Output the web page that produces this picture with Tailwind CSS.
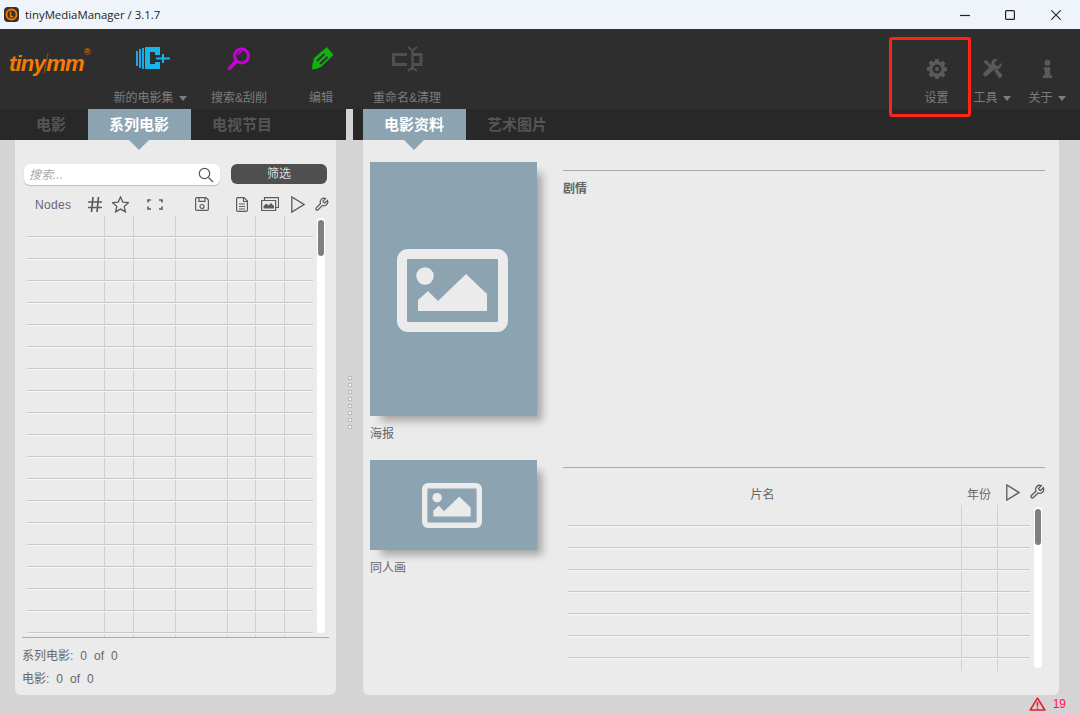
<!DOCTYPE html>
<html lang="zh">
<head>
    <meta charset="UTF-8">
    <title>tinyMediaManager</title>
    <script src="https://cdn.jsdelivr.net/npm/@tailwindcss/browser@4"></script>
</head>
<body class="relative w-[1080px] h-[713px] overflow-hidden bg-[#d4d4d4] font-['Liberation_Sans','Noto_Sans_CJK_SC',sans-serif] text-xs text-[#666]">

    <!-- title bar -->
    <div class="flex items-center h-[29px] bg-[#eff4fb] text-[#222]">
        <div class="flex items-center justify-center w-[15px] h-[15px] ml-1 bg-[#333] rounded-sm">
            <svg width="13" height="13" viewBox="0 0 13 13"><circle cx="6.5" cy="6.5" r="5" fill="none" stroke="#f57c00" stroke-width="1.8"/><path d="M5.5 3.5v5h3" fill="none" stroke="#f57c00" stroke-width="1.5"/></svg>
        </div>
        <span class="ml-[6px] font-['Open_Sans',sans-serif] text-[11.4px]">tinyMediaManager / 3.1.7</span>
        <div class="flex items-center ml-auto">
            <svg class="mr-[35px]" width="10" height="10" viewBox="0 0 10 10"><path d="M0 5.5h10" stroke="#222" stroke-width="1.2"/></svg>
            <svg class="mr-[36px]" width="10" height="10" viewBox="0 0 10 10"><rect x=".6" y=".6" width="8.8" height="8.8" rx="1" fill="none" stroke="#222" stroke-width="1.2"/></svg>
            <svg class="mr-[19px]" width="10" height="10" viewBox="0 0 10 10"><path d="M.3.3l9.4 9.4M9.7.3L.3 9.7" stroke="#222" stroke-width="1.1"/></svg>
        </div>
    </div>

    <!-- toolbar -->
    <div class="flex h-[80px] bg-[#2e2e2e] text-[#7d7d7d]">
        <div class="w-[100px] pt-[21px] pl-[9px]">
            <div class="relative flex w-fit font-['Liberation_Sans',sans-serif] text-[22px] leading-[28px] font-bold italic tracking-[-0.8px] text-[#f57c00]">tiny<span class="-mx-[2px] font-normal text-[#a85500] scale-x-50 scale-y-125">/</span>mm<span class="absolute -right-[6px] -top-[3px] text-[9px] leading-[10px] not-italic font-normal">®</span></div>
        </div>
        <div class="flex flex-col items-center w-[100px]">
            <svg class="mt-[17px] ml-[6px] h-[26px]" width="36" height="26" viewBox="0 0 36 26">
                <path d="M1 5h2v15H1zM4 3h2v19H4zM7 2h2v21H7z" fill="#1aa8e0"/>
                <path d="M10 1h15v8h-5V6h-5v12h5v-2h5v7H10z" fill="#18b4ec"/>
                <path d="M21 12.500h14M28 8v9" stroke="#18b4ec" stroke-width="2"/>
            </svg>
            <div class="flex items-center gap-[5px] mt-[18px] leading-[16px]"><span>新的电影集</span><span class="w-0 h-0 border-x-[4.500px] border-x-transparent border-t-[5px] border-t-[#7d7d7d]"></span></div>
        </div>
        <div class="flex flex-col items-center w-[78px]">
            <svg class="mt-[17px] h-[26px]" width="26" height="26" viewBox="0 0 26 26"><circle cx="15.500" cy="10" r="7" fill="none" stroke="#c800dc" stroke-width="3"/><path d="M10 15.500L3.500 22.500" stroke="#c800dc" stroke-width="3.600" stroke-linecap="round"/><path d="M12 9a4 4 0 0 1 4-3" fill="none" stroke="#c800dc" stroke-width="1.500"/></svg>
            <div class="mt-[18px] leading-[16px]">搜索&amp;刮削</div>
        </div>
        <div class="flex flex-col items-center w-[86px]">
            <svg class="mt-[17px] h-[26px]" width="26" height="26" viewBox="0 0 26 26"><path d="M19 1l6.500 8L13 21q-4 2-9 2.500Q4 18 6 12z" fill="#0cb40c"/><path d="M9 15l7.500-7M12 18l7.500-7" stroke="#2e2e2e" stroke-width="1.800"/></svg>
            <div class="mt-[18px] leading-[16px]">编辑</div>
        </div>
        <div class="flex flex-col items-center w-[86px]">
            <svg class="mt-[17px] h-[26px]" width="32" height="26" viewBox="0 0 32 26" fill="none" stroke="#505050" stroke-width="3"><path d="M16 8.500H2.500v10H16"/><path d="M21 8.500h9v10h-9"/><path d="M21.500 3v21" stroke-width="2.400"/><path d="M17 1l4.500 3.500L26 1M17 25l4.500-3.500L26 25" stroke-width="2"/></svg>
            <div class="mt-[18px] leading-[16px]">重命名&amp;清理</div>
        </div>
        <div class="flex-1"></div>
        <div class="flex flex-col items-center w-[53px]">
            <svg class="mt-[30px] h-[20px]" width="20" height="20" viewBox="0 0 20 20"><path fill="#5a5a5a" fill-rule="evenodd" d="M8.300 0h3.400l.5 2.500 1.600.7 2.200-1.400 2.400 2.400-1.400 2.200.7 1.600 2.500.5v3.400l-2.500.5-.7 1.600 1.400 2.200-2.400 2.400-2.200-1.400-1.600.7-.5 2.500H8.300l-.5-2.500-1.600-.7L4 18.200l-2.400-2.400L3 13.600l-.7-1.600L0 11.700V8.300l2.300-.5.700-1.600L1.600 4 4 1.600l2.200 1.400 1.600-.7zM10 5.500a4.500 4.500 0 1 0 0 9 4.500 4.500 0 0 0 0-9zM10 8a2 2 0 1 1 0 4 2 2 0 0 1 0-4z"/></svg>
            <div class="mt-[11px] leading-[16px]">设置</div>
        </div>
        <div class="flex flex-col items-center w-[58px]">
            <svg class="mt-[30px] h-[20px]" width="21" height="20" viewBox="0 0 22 22" fill="#5a5a5a"><path d="M21 4l-4 4-3-1-1-3 4-4c-3-.8-6 .6-7 3-.5 1.300-.4 2.500 0 3.500L1.500 15c-1.500 1.500-.5 3 0 3.500s2 1.500 3.500 0L13.500 11c1 .4 2.200.5 3.500 0 2.600-1 4.800-3.600 4-7z"/><path d="M1 3l3-2 6 6-2 2.500zM13 13l2.500-2.500 5.500 6c1 1 .8 2.500 0 3.500s-2.500 1-3.500 0z"/></svg>
            <div class="flex items-center gap-[5px] mt-[11px] leading-[16px]"><span>工具</span><span class="w-0 h-0 border-x-[4.500px] border-x-transparent border-t-[5px] border-t-[#7d7d7d]"></span></div>
        </div>
        <div class="flex flex-col items-center w-[52px] mr-[7px]">
            <svg class="mt-[30px] h-[20px]" width="11" height="20" viewBox="0 0 12 22" fill="#5a5a5a"><circle cx="6" cy="4" r="3.200"/><path d="M2 9h7v9h2v3H1v-3h2v-6H2z"/></svg>
            <div class="flex items-center gap-[5px] mt-[11px] leading-[16px]"><span>关于</span><span class="w-0 h-0 border-x-[4.500px] border-x-transparent border-t-[5px] border-t-[#7d7d7d]"></span></div>
        </div>
    </div>

    <div class="flex h-[604px]">
        <!-- left column -->
        <div class="flex flex-col w-[346px]">
            <div class="flex h-[31px] bg-[#282828] pl-[15px] text-[15px] font-bold text-[#555]">
                <div class="flex items-center justify-center w-[73px] pr-[1px]">电影</div>
                <div class="relative flex items-center justify-center w-[103px] pr-[1px] bg-[#8ca3b2] text-white">系列电影
                    <svg class="absolute left-[41px] top-[31px] z-10" width="20" height="10" viewBox="0 0 20 10"><path d="M0 0h20L10 10z" fill="#8ca3b2"/></svg>
                </div>
                <div class="flex items-center pl-[21px]">电视节目</div>
            </div>
            <div class="relative w-[321px] h-[555px] ml-[15px] bg-[#ebebeb] rounded-b-md">
                <div class="flex pt-[24px] pl-[9px]">
                    <div class="flex items-center justify-between w-[196px] h-[21px] pl-[5px] pr-[6px] bg-white rounded-md shadow-[0_1px_1px_rgba(0,0,0,0.2)] text-[#aaa] italic">
                        <span>搜索...</span>
                        <svg width="16" height="16" viewBox="0 0 16 16" fill="none" stroke="#555" stroke-width="1.200"><circle cx="6.500" cy="6.500" r="5.200"/><path d="M10.500 10.500L15 15"/></svg>
                    </div>
                    <div class="flex items-center justify-center w-[96px] h-[20px] ml-[11px] bg-[#4f4f4f] rounded-md text-[#ddd]">筛选</div>
                </div>
                <div class="flex items-center h-[30px] pt-[8px] ml-[12px] w-[303px]">
                    <div class="w-[57px] mt-[1px] pl-[8px] tracking-[0.3px] text-[#667]">Nodes</div>
                    <div class="flex justify-center w-[22px]"><svg width="14" height="15" viewBox="0 0 14 15" stroke="#5c5c5c" stroke-width="1.700"><path d="M5 0L3.500 15M10.500 0L9 15M0 5h14M0 10.500h14"/></svg></div>
                    <div class="flex justify-center w-[28px]"><svg width="17" height="17" viewBox="0 0 17 17" fill="none" stroke="#5c5c5c" stroke-width="1.300"><path d="M8.500 1l2.300 5.100 5.500.6-4.100 3.700 1.200 5.500-4.900-2.800-4.900 2.800 1.200-5.500L.7 6.700l5.500-.6z"/></svg></div>
                    <div class="flex justify-center w-[42px]"><svg width="16" height="11" viewBox="0 0 16 11" fill="none" stroke="#5c5c5c" stroke-width="1.600"><path d="M4 1H1v2.500M12 1h3v2.500M4 10H1V7.500M12 10h3V7.500"/></svg></div>
                    <div class="flex justify-center w-[52px]"><svg width="14" height="14" viewBox="0 0 14 14" fill="none" stroke="#5c5c5c" stroke-width="1.200"><path d="M1.500.6h9.500l2.400 2.400v9.200a1.200 1.200 0 0 1-1.200 1.200H1.800a1.200 1.200 0 0 1-1.200-1.200V1.500z"/><path d="M4 .8v3.500h6V.8"/><circle cx="7" cy="9.500" r="2"/></svg></div>
                    <div class="flex justify-center w-[28px]"><svg width="12" height="15" viewBox="0 0 12 15" fill="none" stroke="#5c5c5c" stroke-width="1.200"><path d="M1.500.6H8l3.400 3.400v9a1.300 1.300 0 0 1-1.300 1.300H1.900A1.300 1.300 0 0 1 .6 13V1.500z"/><path d="M3 7h6M3 9.500h6M3 12h6M7.500.8v3.700h3.700"/></svg></div>
                    <div class="flex justify-center w-[28px]"><svg width="18" height="14" viewBox="0 0 18 14"><path d="M3.500 3V.6h14V10.500H15" fill="none" stroke="#5c5c5c" stroke-width="1.200"/><path d="M.6 3.500h14v10H.6z" fill="none" stroke="#5c5c5c" stroke-width="1.200"/><path d="M2.500 11.500V9l3-2.500 2 2L10 6l3 3v2.500z" fill="#5c5c5c"/></svg></div>
                    <div class="flex justify-center w-[28px]"><svg width="14" height="17" viewBox="0 0 14 17" fill="none" stroke="#5c5c5c" stroke-width="1.300"><path d="M.8.900v15.200L13 8.500z"/></svg></div>
                    <div class="flex justify-center w-[18px]"><svg width="15" height="15" viewBox="0 0 24 24" fill="none" stroke="#5c5c5c" stroke-width="2"><path d="M14.700 6.300a1 1 0 0 0 0 1.400l1.600 1.600a1 1 0 0 0 1.400 0l3.770-3.770a6 6 0 0 1-7.940 7.940l-6.910 6.910a2.120 2.120 0 0 1-3-3l6.910-6.910a6 6 0 0 1 7.940-7.940l-3.760 3.760z"/></svg></div>
                </div>
                <div class="flex ml-[12px]">
                    <div class="w-[286px] h-[422px] overflow-hidden" id="left-rows"></div>
                    <div class="w-[8px] h-[415px] ml-[4px] mt-[3px] p-[1px] pt-[2px] bg-white rounded-full">
                        <div class="h-[36px] bg-[#808080] rounded-full"></div>
                    </div>
                </div>
                <div class="mx-[7px] border-t border-[#aaa] pt-[10px]">
                    <div class="flex gap-[7px] h-[23px] leading-[17px]"><span>系列电影:</span><span>0</span><span>of</span><span>0</span></div>
                    <div class="flex gap-[7px] leading-[17px]"><span>电影:</span><span>0</span><span>of</span><span>0</span></div>
                </div>
            </div>
        </div>

        <!-- splitter -->
        <div class="flex flex-col w-[7px]">
            <div class="h-[31px]"></div>
            <div class="flex flex-col items-center gap-[5px] mt-[237px] ml-[-4px] w-[15px]" id="grip"></div>
        </div>

        <!-- right column -->
        <div class="flex flex-col flex-1">
            <div class="flex h-[31px] bg-[#282828] pl-[10px] text-[15px] font-bold text-[#555]">
                <div class="relative flex items-center justify-center w-[103px] pr-[1px] bg-[#8ca3b2] text-white">电影资料
                    <svg class="absolute left-[41px] top-[31px] z-10" width="20" height="10" viewBox="0 0 20 10"><path d="M0 0h20L10 10z" fill="#8ca3b2"/></svg>
                </div>
                <div class="flex items-center pl-[21px]">艺术图片</div>
            </div>
            <div class="flex w-[696px] h-[555px] ml-[10px] bg-[#ebebeb] rounded-b-md">
                <div class="w-[193px] pt-[22px] pl-[7px]">
                    <div class="flex items-center justify-center w-[167px] h-[254px] bg-[#8ca3b2] shadow-[8px_8px_8px_-3px_rgba(0,0,0,0.3)]">
                        <svg class="mr-[2px] mt-[2px]" width="111" height="83" viewBox="0 0 111 83"><rect x="5" y="5" width="101" height="73" rx="6" fill="none" stroke="#ebebeb" stroke-width="10"/><circle cx="28" cy="27" r="8.700" fill="#ebebeb"/><path d="M21 62V51l10-9 10 10 28-27 21 20v17z" fill="#ebebeb"/></svg>
                    </div>
                    <div class="mt-[10px] leading-[17px]">海报</div>
                    <div class="flex items-center justify-center w-[167px] h-[90px] mt-[17px] bg-[#8ca3b2] shadow-[8px_8px_8px_-3px_rgba(0,0,0,0.3)]">
                        <svg class="mr-[4px]" width="60" height="45" viewBox="0 0 111 83"><rect x="5" y="5" width="101" height="73" rx="6" fill="none" stroke="#ebebeb" stroke-width="10"/><circle cx="28" cy="27" r="8.700" fill="#ebebeb"/><path d="M21 62V51l10-9 10 10 28-27 21 20v17z" fill="#ebebeb"/></svg>
                    </div>
                    <div class="mt-[10px] leading-[17px]">同人画</div>
                </div>
                <div class="w-[482px] ml-[7px] pt-[30px]">
                    <div class="border-t border-[#aaa] h-[297px] pt-[10px] leading-[17px] font-bold">剧情</div>
                    <div class="border-t border-[#aaa]">
                        <div class="flex items-center h-[36px] pt-[12px] pl-[5px]">
                            <div class="w-[394px] mt-[5px] pr-[4px] text-center">片名</div>
                            <div class="w-[36px] mt-[5px] text-center">年份</div>
                            <div class="flex justify-center w-[32px]"><svg width="14" height="17" viewBox="0 0 14 17" fill="none" stroke="#5c5c5c" stroke-width="1.300"><path d="M.8.900v15.200L13 8.500z"/></svg></div>
                            <div class="flex justify-center w-[16px]"><svg width="16" height="16" viewBox="0 0 24 24" fill="none" stroke="#5c5c5c" stroke-width="2"><path d="M14.700 6.300a1 1 0 0 0 0 1.400l1.600 1.600a1 1 0 0 0 1.400 0l3.770-3.770a6 6 0 0 1-7.940 7.940l-6.910 6.910a2.120 2.120 0 0 1-3-3l6.910-6.910a6 6 0 0 1 7.940-7.940l-3.760 3.760z"/></svg></div>
                        </div>
                        <div class="flex pl-[5px]">
                            <div class="w-[462px] h-[167px] overflow-hidden" id="right-rows"></div>
                            <div class="w-[8px] h-[161px] ml-[4px] mt-[3px] p-[1px] pt-[2px] bg-white rounded-full">
                                <div class="h-[36px] bg-[#808080] rounded-full"></div>
                            </div>
                        </div>
                    </div>
                </div>
            </div>
            <div class="flex items-center justify-end h-[18px] pr-[14px] text-[#ff1744]">
                <svg width="17" height="14" viewBox="0 0 17 14" fill="none"><path d="M8.500 1.200L15.800 13H1.200z" stroke="#ee1c25" stroke-width="1.600" stroke-linejoin="round"/><path d="M8.500 5v4.500M8.500 10.500v1.300" stroke="#ee1c25" stroke-width="1.600"/></svg>
                <span class="ml-[7px]">19</span>
            </div>
        </div>
    </div>

    <!-- annotation -->
    <div class="absolute left-[889px] top-[37px] w-[82px] h-[80px] border-[3px] border-[#ff2417] rounded-[3px]"></div>

    <script>
    // table rows are all alike
    function fillRows(id, count, widths) {
        const box = document.getElementById(id);
        for (let i = 0; i < count; i++) {
            const row = document.createElement('div');
            row.className = 'flex h-[22px] border-b border-[#c8c8c8] shadow-[0_1px_0_#f6f6f6]';
            widths.forEach((w, n) => {
                const cell = document.createElement('div');
                cell.className = n < widths.length - 1 ? 'h-[20px] mt-[1px] border-r border-[#d0d0d0]' : 'h-[20px] mt-[1px]';
                cell.style.width = w + 'px';
                row.appendChild(cell);
            });
            box.appendChild(row);
        }
    }
    fillRows('left-rows', 20, [78, 29, 42, 52, 28, 29, 28]);
    fillRows('right-rows', 8, [394, 36, 32]);

    const grip = document.getElementById('grip');
    for (let i = 0; i < 8; i++) {
        const dot = document.createElement('div');
        dot.className = 'w-[2px] h-[2px] bg-[#f5f5f5] outline outline-[#aaa]/60';
        grip.appendChild(dot);
    }
    </script>
</body>
</html>
